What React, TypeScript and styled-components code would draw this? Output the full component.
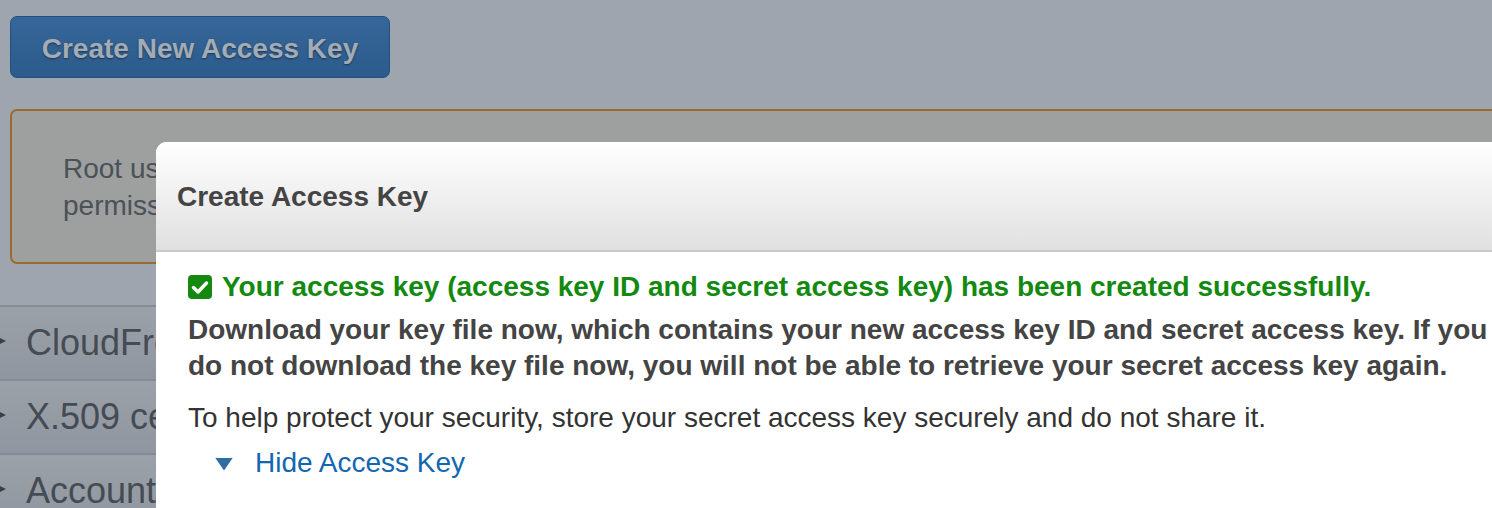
import React from "react";
import styled, { createGlobalStyle } from "styled-components";

const Global = createGlobalStyle`
  html, body { margin: 0; padding: 0; }
  body {
    width: 1492px;
    height: 508px;
    overflow: hidden;
    background: #9ea5ae;
    font-family: "Liberation Sans", Arial, Helvetica, sans-serif;
  }
`;

const Page = styled.div`
  position: relative;
  width: 1492px;
  height: 508px;
  overflow: hidden;
  background: #9ea5ae;
  padding-top: 16px;
  box-sizing: border-box;
`;

const Toolbar = styled.div`
  padding-left: 10px;
  height: 62px;
`;

const PrimaryButton = styled.button`
  height: 62px;
  width: 380px;
  box-sizing: border-box;
  border: 1px solid #22507f;
  border-radius: 7px;
  background: linear-gradient(#37679a, #2b5a8b);
  color: #a3abb4;
  font-family: inherit;
  font-weight: bold;
  font-size: 28px;
  text-shadow: 0 1px 2px rgba(0, 0, 0, 0.45);
  padding: 3px 0 0;
  cursor: pointer;
`;

const Warning = styled.div`
  margin: 31px 0 0 10px;
  width: 1600px;
  height: 155px;
  box-sizing: border-box;
  border: 2px solid #9a6b2e;
  border-radius: 7px;
  background: #9ea09f;
  padding: 39px 0 0 51px;
  color: #4b5158;
  font-size: 28px;
  line-height: 37px;
`;

const List = styled.div`
  margin-top: 41px;
`;

const Row = styled.div`
  height: 74px;
  box-sizing: border-box;
  border-top: 2px solid #868c94;
  background: linear-gradient(#9ba1a9, #90969f);
  display: flex;
  align-items: center;
  gap: 20px;
  color: #454b53;
  font-size: 36px;
`;

const Caret = styled.span`
  width: 14px;
  height: 14px;
  margin-left: -8px;
  background: #3a4047;
  clip-path: polygon(0 0, 100% 50%, 0 100%);
  margin-top: -4px;
`;

const Modal = styled.div`
  position: absolute;
  left: 156px;
  top: 142px;
  width: 1500px;
  height: 500px;
  background: #ffffff;
  border-top-left-radius: 11px;
  overflow: hidden;
`;

const ModalHeader = styled.div`
  height: 110px;
  box-sizing: border-box;
  border-bottom: 2px solid #cacaca;
  background: linear-gradient(#ffffff, #e0e0e0);
  display: flex;
  align-items: center;
  padding-left: 21px;
  padding-top: 1px;
`;

const Title = styled.h2`
  margin: 0;
  font-size: 28px;
  font-weight: bold;
  color: #444444;
`;

const ModalBody = styled.div`
  padding: 20px 0 0 32px;
`;

const Success = styled.div`
  display: flex;
  align-items: center;
  gap: 10px;
  color: #138a0f;
  font-weight: bold;
  font-size: 28px;
  line-height: 30px;
  white-space: nowrap;
`;

const Strong = styled.p`
  margin: 10px 0 0;
  font-weight: bold;
  font-size: 28px;
  line-height: 36px;
  color: #444444;
  white-space: nowrap;
`;

const Note = styled.p`
  margin: 19px 0 0;
  font-size: 28px;
  line-height: 30px;
  color: #333333;
  white-space: nowrap;
`;

const Toggle = styled.a`
  display: flex;
  align-items: center;
  gap: 22px;
  margin: 15px 0 0 27px;
  color: #1167b1;
  font-size: 28px;
  line-height: 30px;
  text-decoration: none;
  cursor: pointer;
`;

const Down = styled.span`
  width: 18px;
  height: 13px;
  background: #2f6ca3;
  clip-path: polygon(0 0, 100% 0, 50% 100%);
  margin-top: 2px;
`;

const CheckBox = () => (
  <svg width="24" height="24" viewBox="0 0 24 24">
    <rect x="0" y="0" width="24" height="24" rx="4" fill="#138a0f" />
    <path
      d="M5.5 12.5 L10 17 L18.5 8"
      fill="none"
      stroke="#ffffff"
      strokeWidth="3.4"
      strokeLinecap="round"
      strokeLinejoin="round"
    />
  </svg>
);

export default function App() {
  return (
    <>
      <Global />
      <Page>
        <Toolbar>
          <PrimaryButton>Create New Access Key</PrimaryButton>
        </Toolbar>
        <Warning>
          Root user access keys provide unrestricted access to your entire AWS account.
          <br />
          permissions.
        </Warning>
        <List>
          <Row>
            <Caret />
            CloudFront key pairs
          </Row>
          <Row>
            <Caret />
            X.509 certificate
          </Row>
          <Row>
            <Caret />
            Account identifiers
          </Row>
        </List>
        <Modal role="dialog">
          <ModalHeader>
            <Title>Create Access Key</Title>
          </ModalHeader>
          <ModalBody>
            <Success>
              <CheckBox />
              Your access key (access key ID and secret access key) has been created successfully.
            </Success>
            <Strong>
              Download your key file now, which contains your new access key ID and secret access key. If you
              <br />
              do not download the key file now, you will not be able to retrieve your secret access key again.
            </Strong>
            <Note>
              To help protect your security, store your secret access key securely and do not share it.
            </Note>
            <Toggle>
              <Down />
              Hide Access Key
            </Toggle>
          </ModalBody>
        </Modal>
      </Page>
    </>
  );
}
